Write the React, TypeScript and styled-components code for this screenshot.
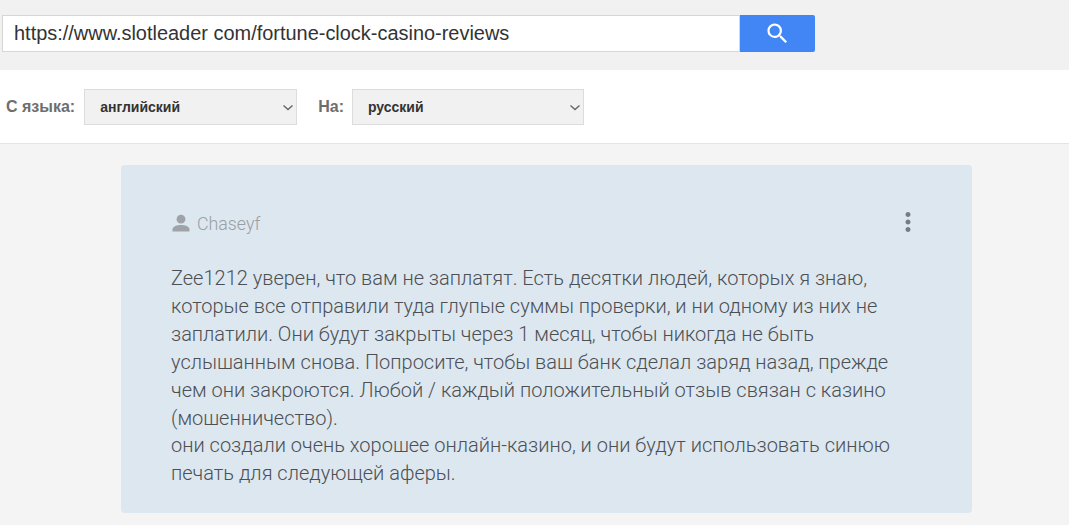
import React from 'react';
import styled, { createGlobalStyle } from 'styled-components';
import { MdSearch, MdMoreVert } from 'react-icons/md';

const GlobalStyle = createGlobalStyle`
  html, body {
    margin: 0;
    padding: 0;
    background: #f4f4f4;
    overflow: hidden;
  }
`;

const Page = styled.div`
  width: 1069px;
  height: 525px;
  overflow: hidden;
  font-family: "Liberation Sans", Arial, sans-serif;
`;

const TopBar = styled.div`
  display: flex;
  height: 70px;
  box-sizing: border-box;
  padding: 15px 0 0 2px;
  background: #f1f1f1;
`;

const UrlInput = styled.div`
  box-sizing: border-box;
  width: 738px;
  height: 37px;
  padding-left: 11px;
  background: #fff;
  border: 1px solid #d6d6d6;
  color: #333;
  font-size: 19.95px;
  line-height: 35px;
`;

const SearchButton = styled.div`
  width: 75px;
  height: 37px;
  display: flex;
  align-items: center;
  justify-content: center;
  background: #4285f4;
  border-radius: 0 2px 2px 0;
  color: #fff;
  font-size: 27px;
`;

const LangBar = styled.div`
  display: flex;
  align-items: center;
  height: 74px;
  box-sizing: border-box;
  padding: 0 0 0 6px;
  background: #fff;
  border-bottom: 1px solid #e4e4e4;
`;

const LangLabel = styled.span<{ $gap: number }>`
  color: #6e6e6e;
  font-size: 16px;
  font-weight: bold;
  margin-right: ${p => p.$gap}px;
`;

const Select = styled.div<{ $gap?: number }>`
  box-sizing: border-box;
  width: ${p => (p.$gap ? 213 : 232)}px;
  height: 36px;
  display: flex;
  align-items: center;
  justify-content: space-between;
  padding: 0 0 0 15px;
  margin-right: ${p => p.$gap ?? 0}px;
  background: #f1f1f1;
  border: 1px solid #dcdcdc;
  color: #333;
  font-size: 14px;
  font-weight: bold;
`;

const Card = styled.div`
  box-sizing: border-box;
  width: 851px;
  height: 348px;
  margin: 21px 0 0 121px;
  padding: 43px 50px 0 50px;
  background: #dde7f0;
  border-radius: 4px;
  font-family: Roboto, "Liberation Sans", sans-serif;
`;

const CardHead = styled.div`
  display: flex;
  align-items: center;
  justify-content: space-between;
  height: 28px;
`;

const Author = styled.div`
  display: flex;
  align-items: center;
  gap: 7px;
  padding: 2px 0 0 1px;
  color: #9a9ea3;
  font-size: 17.8px;
  font-weight: 300;
`;

const MoreButton = styled.div`
  display: flex;
  margin-right: -1px;
  color: #757b82;
  font-size: 30px;
`;

const Body = styled.p`
  margin: 29px 0 0;
  color: #4c5054;
  font-size: 20px;
  font-weight: 300;
  line-height: 27.9px;
  white-space: pre-line;
`;

const text = `Zee1212 уверен, что вам не заплатят. Есть десятки людей, которых я знаю,
которые все отправили туда глупые суммы проверки, и ни одному из них не
заплатили. Они будут закрыты через 1 месяц, чтобы никогда не быть
услышанным снова. Попросите, чтобы ваш банк сделал заряд назад, прежде
чем они закроются. Любой / каждый положительный отзыв связан с казино
(мошенничество).
они создали очень хорошее онлайн-казино, и они будут использовать синюю
печать для следующей аферы.`;

const Chevron = () => (
  <svg width="16" height="16" viewBox="0 0 16 16" fill="none" stroke="#666" strokeWidth="1.4">
    <path d="M3.5 6.5l4.5 4 4.5-4" />
  </svg>
);

const PersonIcon = () => (
  <svg width="18" height="18" viewBox="0 0 18 18" fill="#9fa3a8">
    <circle cx="9" cy="5.2" r="4.4" />
    <path d="M0.5 17.5v-2.2c0-2.8 4.6-4.3 8.5-4.3s8.5 1.5 8.5 4.3v2.2z" />
  </svg>
);

export default function App() {
  return (
    <Page>
      <GlobalStyle />
      <TopBar>
        <UrlInput>https://www.slotleader com/fortune-clock-casino-reviews</UrlInput>
        <SearchButton><MdSearch /></SearchButton>
      </TopBar>
      <LangBar>
        <LangLabel $gap={9}>С языка:</LangLabel>
        <Select $gap={21}>английский<Chevron /></Select>
        <LangLabel $gap={8}>На:</LangLabel>
        <Select>русский<Chevron /></Select>
      </LangBar>
      <Card>
        <CardHead>
          <Author><PersonIcon />Chaseyf</Author>
          <MoreButton><MdMoreVert /></MoreButton>
        </CardHead>
        <Body>{text}</Body>
      </Card>
    </Page>
  );
}
